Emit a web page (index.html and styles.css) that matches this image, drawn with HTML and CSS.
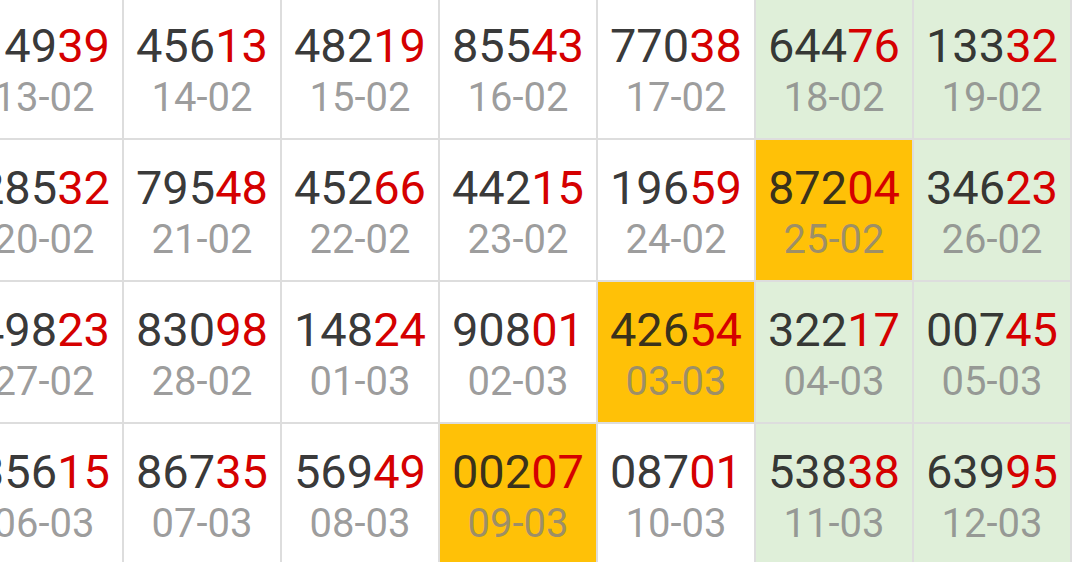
FILE: index.html
```html
<!DOCTYPE html>
<html>
<head>
<meta charset="utf-8">
<link rel="stylesheet" href="styles.css">
</head>
<body>
<div class="board">
  <div class="cell"><div class="num">149<span class="hi">39</span></div><div class="date">13-02</div></div>
  <div class="cell"><div class="num">456<span class="hi">13</span></div><div class="date">14-02</div></div>
  <div class="cell"><div class="num">482<span class="hi">19</span></div><div class="date">15-02</div></div>
  <div class="cell"><div class="num">855<span class="hi">43</span></div><div class="date">16-02</div></div>
  <div class="cell"><div class="num">770<span class="hi">38</span></div><div class="date">17-02</div></div>
  <div class="cell green"><div class="num">644<span class="hi">76</span></div><div class="date">18-02</div></div>
  <div class="cell green"><div class="num">133<span class="hi">32</span></div><div class="date">19-02</div></div>

  <div class="cell"><div class="num">285<span class="hi">32</span></div><div class="date">20-02</div></div>
  <div class="cell"><div class="num">795<span class="hi">48</span></div><div class="date">21-02</div></div>
  <div class="cell"><div class="num">452<span class="hi">66</span></div><div class="date">22-02</div></div>
  <div class="cell"><div class="num">442<span class="hi">15</span></div><div class="date">23-02</div></div>
  <div class="cell"><div class="num">196<span class="hi">59</span></div><div class="date">24-02</div></div>
  <div class="cell yellow"><div class="num">872<span class="hi">04</span></div><div class="date">25-02</div></div>
  <div class="cell green"><div class="num">346<span class="hi">23</span></div><div class="date">26-02</div></div>

  <div class="cell"><div class="num">498<span class="hi">23</span></div><div class="date">27-02</div></div>
  <div class="cell"><div class="num">830<span class="hi">98</span></div><div class="date">28-02</div></div>
  <div class="cell"><div class="num">148<span class="hi">24</span></div><div class="date">01-03</div></div>
  <div class="cell"><div class="num">908<span class="hi">01</span></div><div class="date">02-03</div></div>
  <div class="cell yellow"><div class="num">426<span class="hi">54</span></div><div class="date">03-03</div></div>
  <div class="cell green"><div class="num">322<span class="hi">17</span></div><div class="date">04-03</div></div>
  <div class="cell green"><div class="num">007<span class="hi">45</span></div><div class="date">05-03</div></div>

  <div class="cell"><div class="num">356<span class="hi">15</span></div><div class="date">06-03</div></div>
  <div class="cell"><div class="num">867<span class="hi">35</span></div><div class="date">07-03</div></div>
  <div class="cell"><div class="num">569<span class="hi">49</span></div><div class="date">08-03</div></div>
  <div class="cell yellow"><div class="num">002<span class="hi">07</span></div><div class="date">09-03</div></div>
  <div class="cell"><div class="num">087<span class="hi">01</span></div><div class="date">10-03</div></div>
  <div class="cell green"><div class="num">538<span class="hi">38</span></div><div class="date">11-03</div></div>
  <div class="cell green"><div class="num">639<span class="hi">95</span></div><div class="date">12-03</div></div>
</div>
</body>
</html>
```

FILE: styles.css
```css
html, body {
  margin: 0;
  padding: 0;
  background: #ffffff;
  overflow: hidden;
  width: 1079px;
  height: 562px;
}

.board {
  display: grid;
  grid-template-columns: repeat(7, 156px);
  grid-auto-rows: 140px;
  gap: 2px;
  padding: 2px;
  width: max-content;
  background: #dddddd;
  margin-left: -36px;
  margin-top: -4px;
  font-family: Roboto, "Noto Sans", sans-serif;
}

.cell {
  background: #ffffff;
  display: flex;
  flex-direction: column;
  align-items: center;
  padding-top: 23px;
  box-sizing: border-box;
  white-space: nowrap;
}

.cell.green {
  background: #dfefd9;
}

.cell.yellow {
  background: #ffc107;
}

.num {
  font-size: 47px;
  line-height: 50px;
  color: rgba(30, 30, 30, 0.9);
}

.num .hi {
  color: #d50000;
}

.date {
  margin-top: 4px;
  font-size: 40px;
  line-height: 46px;
  color: rgba(130, 130, 130, 0.78);
}
```
